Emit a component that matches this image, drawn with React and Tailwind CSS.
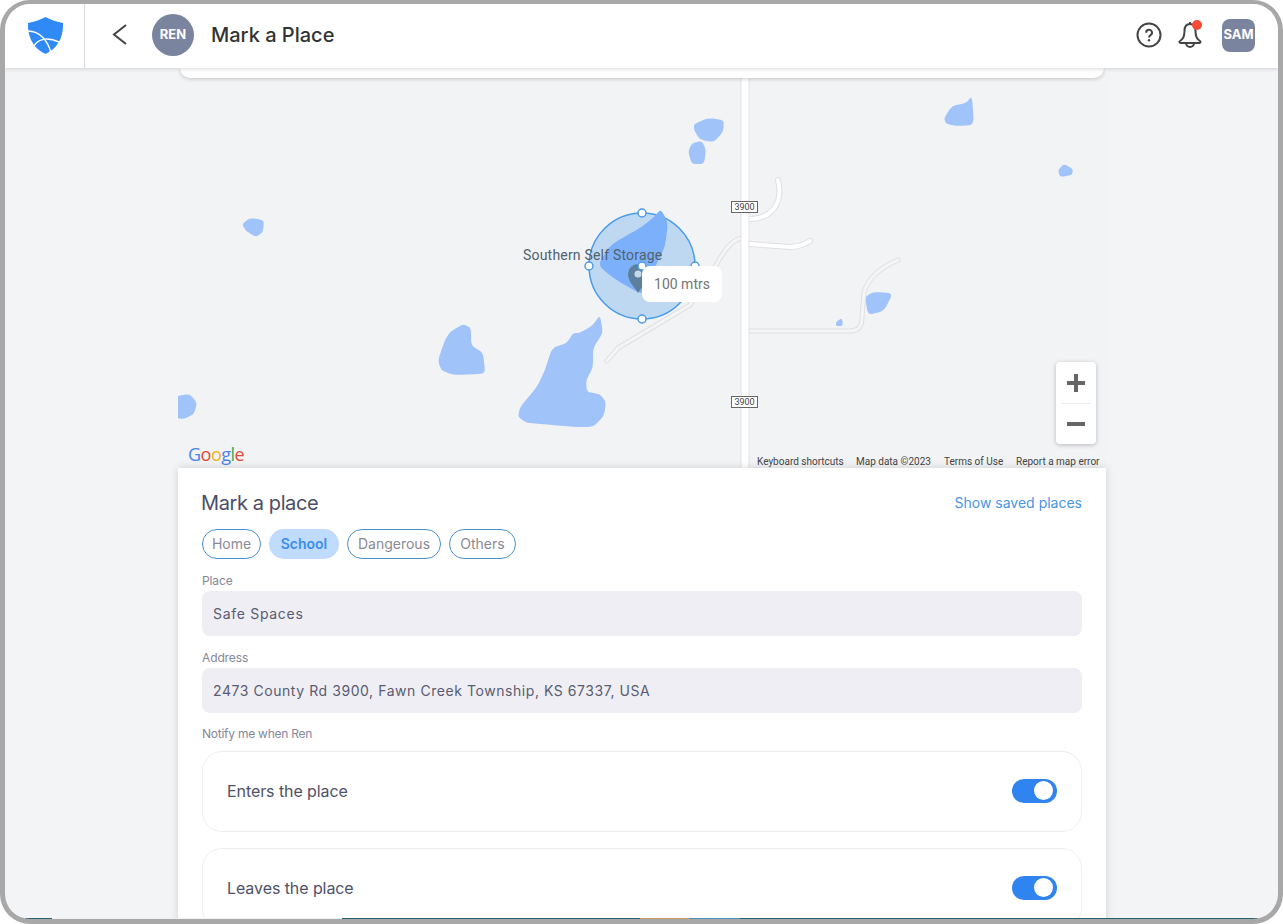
import React from 'react';

const lakes = [
  [[694, 124], [708, 118], [724, 120], [723, 132], [714, 142], [700, 140], [694, 130]],
  [[688, 152], [692, 143], [702, 141], [706, 150], [704, 164], [692, 164]],
  [[944, 118], [952, 106], [966, 103], [972, 96], [974, 125], [958, 126], [946, 124]],
  [[1058, 170], [1064, 164], [1073, 169], [1072, 175], [1060, 177]],
  [[242, 224], [250, 218], [264, 220], [263, 232], [256, 237], [246, 231]],
  [[463, 324], [471, 328], [471, 345], [483, 353], [485, 370], [483, 374], [453, 375], [441, 370], [438, 360], [445, 340], [450, 332]],
  [[600, 315], [603, 333], [593, 348], [593, 368], [586, 380], [587, 392], [600, 394], [606, 402], [604, 416], [593, 427], [573, 427], [543, 424], [527, 423], [518, 417], [520, 407], [537, 387], [545, 370], [552, 348], [567, 343], [573, 333], [580, 333], [593, 325]],
  [[176, 396], [190, 394], [197, 403], [194, 414], [184, 419], [176, 418]],
  [[865, 297], [873, 292], [893, 293], [884, 311], [868, 315]],
  [[836, 322], [842, 318], [843, 326], [836, 326]],
];

const circleLake = [[661, 209], [668, 223], [665, 247], [657, 263], [643, 293], [637, 292], [613, 278], [598, 265], [610, 245], [640, 228], [653, 218]];

// rounds each corner a bit, the water on the map has no hard edges
const smooth = (pts) => {
  const n = pts.length;
  const along = (a, b, t) => [a[0] + (b[0] - a[0]) * t, a[1] + (b[1] - a[1]) * t];
  let d = '';
  pts.forEach((p, i) => {
    const start = along(p, pts[(i - 1 + n) % n], 0.3);
    const end = along(p, pts[(i + 1) % n], 0.3);
    d += `${i === 0 ? 'M' : 'L'}${start[0]} ${start[1]} Q${p[0]} ${p[1]} ${end[0]} ${end[1]} `;
  });
  return d + 'Z';
};

const roads = [
  'M749 219 C770 219 784 205 778 180',
  'M749 244 L790 247 Q800 247 810 241',
  'M742 238 C730 240 722 255 716 265 L690 305 L618 348 L607 361',
  'M749 331 L850 331 Q862 331 862 318 L864 292 Q870 272 898 260',
];

const handles = [[642, 213], [589, 266], [695, 266], [642, 319], [642, 266]];

const chips = [
  { label: 'Home', width: 'w-[59px]' },
  { label: 'School', width: 'w-[70px]', active: true },
  { label: 'Dangerous', width: 'w-[94px]' },
  { label: 'Others', width: 'w-[67px]' },
];

const Shield = ({ className }) => (
  <div className={`absolute left-[553px] w-[27px] h-[12px] bg-white border border-[#666] flex items-center justify-center font-['Roboto',sans-serif] text-[9px] leading-none text-[#444] ${className}`}>
    3900
  </div>
);

const MapView = () => (
  <div className="relative h-[400px] bg-[#f2f3f5] overflow-hidden">
    <svg className="absolute inset-0" width="928" height="400" viewBox="178 68 928 400">
      {lakes.map((pts) => (
        <path key={pts[0].join()} d={smooth(pts)} fill="#a0c3fa" />
      ))}
      {roads.map((d, i) => (
        <g key={d} fill="none" strokeLinecap="round" strokeLinejoin="round">
          <path d={d} stroke="#dfe0e3" strokeWidth={i < 2 ? 6 : 5} />
          <path d={d} stroke={i < 2 ? '#ffffff' : '#f5f5f6'} strokeWidth={i < 2 ? 4 : 3} />
        </g>
      ))}
      <path d="M745 68 L745 468" stroke="#e2e3e6" strokeWidth="9" fill="none" />
      <path d="M745 68 L745 468" stroke="#ffffff" strokeWidth="7" fill="none" />
      <circle cx="642" cy="266" r="53" fill="#4a9be8" fillOpacity="0.3" stroke="#4a9be8" strokeWidth="1.5" />
      <path d={smooth(circleLake)} fill="#7cb0fb" />
      <path d="M638 293 C634 286 628 282 628 274 A10 10 0 0 1 648 274 C648 282 642 286 638 293 Z" fill="#5d7f9e" />
      <circle cx="638" cy="274" r="3.5" fill="#c5d8ea" />
      {handles.map(([cx, cy]) => (
        <circle key={`${cx}-${cy}`} cx={cx} cy={cy} r="4" fill="#ffffff" stroke="#4a9be8" strokeWidth="1.5" />
      ))}
    </svg>

    {/* search card peeking out under the header */}
    <div className="absolute left-[2px] right-[2px] top-0 h-[10px] bg-white rounded-b-2xl shadow-[0_1px_4px_rgba(0,0,0,0.2)]" />

    <span className="absolute left-[345px] top-[179px] font-['Roboto',sans-serif] text-sm leading-4 tracking-[0.2px] text-[#50626f]">
      Southern Self Storage
    </span>

    <Shield className="top-[133px]" />
    <Shield className="top-[328px]" />

    <div className="absolute left-[464px] top-[198px] w-[80px] h-[36px] bg-white rounded-lg flex items-center justify-center font-['Roboto',sans-serif] text-sm text-[#757575]">
      100 mtrs
    </div>

    <div className="absolute left-[878px] top-[294px] w-[40px] h-[82px] bg-white rounded-sm shadow-[0_1px_4px_rgba(0,0,0,0.25)] flex flex-col items-center">
      <div className="h-[41px] flex items-center justify-center">
        <svg width="18" height="18" viewBox="0 0 18 18"><path d="M9 0 V18 M0 9 H18" stroke="#666666" strokeWidth="4" /></svg>
      </div>
      <div className="w-[30px] h-px bg-[#eeeeee]" />
      <div className="h-[40px] flex items-center justify-center">
        <svg width="18" height="18" viewBox="0 0 18 18"><path d="M0 9 H18" stroke="#666666" strokeWidth="4" /></svg>
      </div>
    </div>

    <div className="absolute left-[10px] top-[374px] font-['Open_Sans',sans-serif] text-lg leading-6 font-medium tracking-[-0.5px]">
      <span className="text-[#4a85e8]">G</span>
      <span className="text-[#e04a3a]">o</span>
      <span className="text-[#f2b417]">o</span>
      <span className="text-[#4a85e8]">g</span>
      <span className="text-[#3fa95a]">l</span>
      <span className="text-[#e04a3a]">e</span>
    </div>

    <div className="absolute left-[579px] top-[386px] w-[349px] h-[14px] flex items-center font-['Roboto',sans-serif] text-[10px] text-[#444]">
      <span className="w-[99px]">Keyboard shortcuts</span>
      <span className="w-[88px]">Map data ©2023</span>
      <span className="w-[72px]">Terms of Use</span>
      <span>Report a map error</span>
    </div>
  </div>
);

const Field = ({ label, value, tracking }) => (
  <div>
    <div className="h-[23px] pt-[5px] text-xs leading-4 tracking-[-0.01em] text-[#85879a]">{label}</div>
    <div className={`h-[45px] rounded-lg bg-[#eeeef4] px-[11px] flex items-center text-sm text-[#5a5c70] ${tracking}`}>
      {value}
    </div>
  </div>
);

const NotifyCard = ({ label }) => (
  <div className="h-[81px] shrink-0 rounded-[20px] border border-[#eeeef1] px-6 pb-[2px] flex items-center justify-between">
    <span className="text-base tracking-[-0.005em] text-[#4f5168]">{label}</span>
    <div className="w-[45px] h-6 rounded-full bg-[#2f84f0] flex items-center justify-end pr-1">
      <div className="w-[19px] h-[19px] rounded-full bg-white" />
    </div>
  </div>
);

const App = () => (
  <div className="w-[1283px] h-[924px] bg-white overflow-hidden font-['Inter',sans-serif]">
    <div className="relative w-full h-full rounded-[30px] border-[5px] border-t-4 border-[#a8a8a8] bg-[#f3f4f6] overflow-hidden flex flex-col">
      {/* Header */}
      <header className="relative z-10 h-[64px] shrink-0 bg-white shadow-[0_1px_4px_rgba(0,0,0,0.15)] flex items-center pr-[23px]">
        <div className="w-[80px] h-full border-r border-[#d9d9d9] flex items-center pl-[23px] pb-[2px]">
          <svg width="35" height="37" viewBox="0 0 35 37">
            <path d="M17.5 0 C23 3 29 5 35 6 C35.5 20 30 31 17.5 37 C5 31 -0.5 20 0 6 C6 5 12 3 17.5 0 Z" fill="#2f8af5" />
            <path d="M0 14 C12 14 20 24 23 36 M5 31 C9 21 20 20 31 25" stroke="#ffffff" strokeWidth="1.5" fill="none" />
          </svg>
        </div>
        <div className="flex items-center pb-[2px]">
          <svg className="ml-[27px]" width="16" height="24" viewBox="0 0 16 24">
            <path d="M14 2 L2 11.5 L14 21" stroke="#444444" strokeWidth="2" fill="none" />
          </svg>
          <div className="ml-[24px] w-[42px] h-[42px] rounded-full bg-[#7a849f] flex items-center justify-center text-white text-[13px] font-bold">
            REN
          </div>
          <h1 className="ml-[17px] text-xl font-medium text-[#333]">Mark a Place</h1>
        </div>
        <div className="ml-auto flex items-center pb-[2px]">
          <svg width="26" height="26" viewBox="0 0 26 26">
            <circle cx="13" cy="13" r="11.5" stroke="#444444" strokeWidth="2" fill="none" />
            <path d="M10.2 10.8 A2.9 2.9 0 1 1 14.5 13.2 C13.5 13.8 13 14.2 13 15.5" stroke="#444444" strokeWidth="2" fill="none" />
            <circle cx="13" cy="18.3" r="1.2" fill="#444444" />
          </svg>
          <div className="relative ml-[16px] w-[24px] h-[28px]">
            <svg width="24" height="28" viewBox="0 0 24 28">
              <path d="M12 3 C8 3 6.5 6 6.5 10 C6.5 15 5.5 18 2 20 C1 20.6 1.5 22 2.5 22 H21.5 C22.5 22 23 20.6 22 20 C18.5 18 17.5 15 17.5 10 C17.5 6 16 3 12 3 Z M8 22 A4 4 0 0 0 16 22 M12 1 V3" stroke="#444444" strokeWidth="2" fill="none" strokeLinejoin="round" />
            </svg>
            <div className="absolute left-[14px] -top-[1px] w-[10px] h-[10px] rounded-full bg-[#f44a36]" />
          </div>
          <div className="ml-[20px] w-[33px] h-[33px] rounded-lg bg-[#7a849f] flex items-center justify-center text-white text-[13px] font-bold">
            SAM
          </div>
        </div>
      </header>

      {/* Content */}
      <main className="flex-1 min-h-0 w-[928px] ml-[173px]">
        <MapView />
        <section className="relative h-full bg-white shadow-[0_0_8px_rgba(0,0,0,0.15)] px-6 pt-5">
          <div className="flex items-center justify-between h-[30px]">
            <h2 className="-ml-px text-xl tracking-[-0.02em] text-[#4b4d66]">Mark a place</h2>
            <a className="text-sm text-[#4a94e4]">Show saved places</a>
          </div>
          <div className="mt-[11px] flex gap-2">
            {chips.map((chip) => (
              <div
                key={chip.label}
                className={`${chip.width} h-[30px] rounded-full flex items-center justify-center text-sm ${chip.active ? 'bg-[#bfdcff] text-[#3b8cee] font-semibold' : 'border border-[#4a90d0] text-[#8a8a96]'}`}
              >
                {chip.label}
              </div>
            ))}
          </div>
          <div className="mt-[9px]">
            <Field label="Place" value="Safe Spaces" tracking="tracking-[0.05em]" />
          </div>
          <div className="mt-[9px]">
            <Field label="Address" value="2473 County Rd 3900, Fawn Creek Township, KS 67337, USA" tracking="tracking-[0.04em]" />
          </div>
          <div className="mt-[13px] h-[25px] text-xs leading-4 tracking-[-0.02em] text-[#85879a]">Notify me when Ren</div>
          <div className="flex flex-col gap-4">
            <NotifyCard label="Enters the place" />
            <NotifyCard label="Leaves the place" />
          </div>
        </section>
      </main>

      {/* sliver of what sits behind the frame */}
      <div className="absolute inset-x-[20px] bottom-0 h-px z-20 bg-[#2a6070]">
        <div className="absolute left-[27px] w-[290px] h-px bg-[#f0f1f3]" />
        <div className="absolute left-[615px] w-[50px] h-px bg-[#c89a6a]" />
        <div className="absolute left-[665px] w-[50px] h-px bg-[#4a90c0]" />
      </div>
    </div>
  </div>
);

export default App;
